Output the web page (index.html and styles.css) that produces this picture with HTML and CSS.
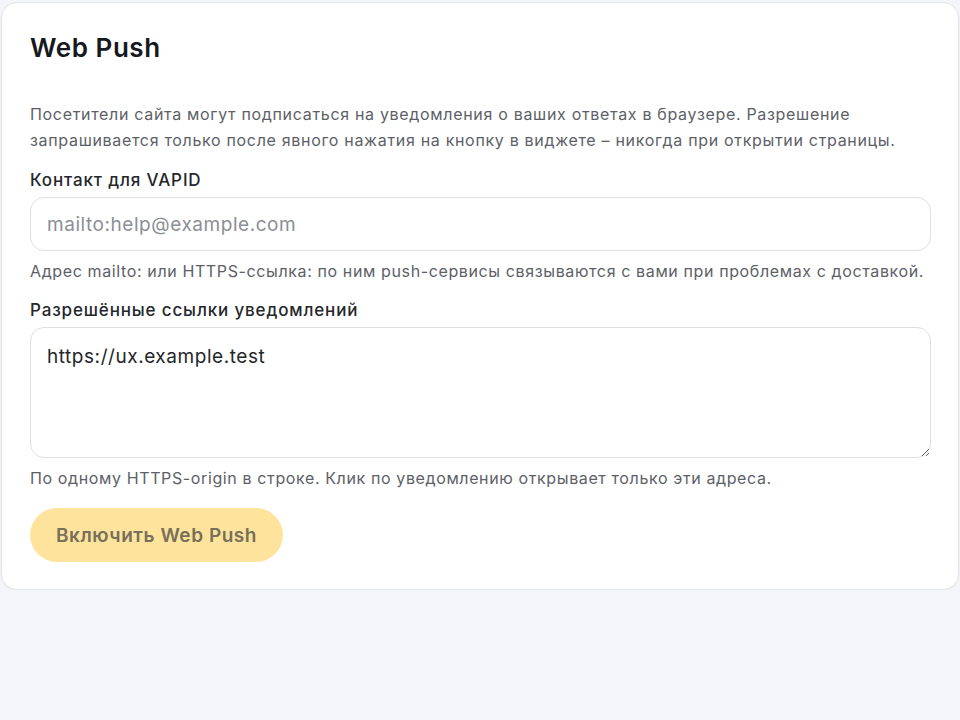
FILE: index.html
```html
<!DOCTYPE html>
<html lang="ru">
<head>
<meta charset="utf-8">
<title>Web Push</title>
<link rel="stylesheet" href="styles.css">
</head>
<body>
<section class="card">
  <h2 class="title">Web Push</h2>
  <p class="intro">Посетители сайта могут подписаться на уведомления о ваших ответах в браузере. Разрешение запрашивается только после явного нажатия на кнопку в виджете – никогда при открытии страницы.</p>
  <div class="field">
    <label class="label" for="vapid">Контакт для VAPID</label>
    <input class="input" id="vapid" type="text" placeholder="mailto:help@example.com">
    <p class="hint">Адрес mailto: или HTTPS-ссылка: по ним push-сервисы связываются с вами при проблемах с доставкой.</p>
  </div>
  <div class="field">
    <label class="label" for="origins">Разрешённые ссылки уведомлений</label>
    <textarea class="input textarea" id="origins">https://ux.example.test</textarea>
    <p class="hint">По одному HTTPS-origin в строке. Клик по уведомлению открывает только эти адреса.</p>
  </div>
  <button class="btn" type="button" disabled>Включить Web Push</button>
</section>
</body>
</html>
```

FILE: styles.css
```css
html, body {
  margin: 0;
  padding: 0;
  background: #f3f5f8;
}
body {
  padding: 2px 1px 0 1px;
  font-family: Inter, "Noto Sans", sans-serif;
  color: #1f2328;
}
.card {
  background: #ffffff;
  border: 1px solid #e3e6ea;
  border-radius: 16px;
  padding: 28px 27px 27px 28px;
  box-shadow: 0 1px 2px rgba(20, 30, 50, 0.04);
}
.title {
  margin: 0;
  font-size: 26px;
  font-weight: 600;
  line-height: 34px;
  color: #16191d;
  letter-spacing: 0.55px;
}
.intro {
  margin: 36px 0 0 0;
  font-size: 16px;
  line-height: 26px;
  color: #5c6167;
  letter-spacing: 0.68px;
}
.field {
  display: flex;
  flex-direction: column;
  margin-top: 16px;
}
.label {
  font-size: 17px;
  font-weight: 500;
  line-height: 22px;
  color: #24272b;
  margin-bottom: 6px;
  letter-spacing: 0.85px;
}
.input {
  box-sizing: border-box;
  width: 100%;
  height: 54px;
  border: 1px solid #dcdfe4;
  border-radius: 14px;
  padding: 0 16px;
  font-family: inherit;
  font-size: 19px;
  letter-spacing: 0.55px;
  color: #23262a;
  background: #ffffff;
  outline: none;
}
.input::placeholder {
  color: #8b8f95;
}
.textarea {
  height: 131px;
  padding: 15px 16px 14px 16px;
  line-height: 27px;
  resize: vertical;
}
.hint {
  margin: 8px 0 0 0;
  font-size: 16px;
  line-height: 24px;
  color: #5c6167;
  letter-spacing: 0.62px;
}
.btn {
  align-self: flex-start;
  margin-top: 18px;
  height: 54px;
  padding: 0 26px;
  border: none;
  border-radius: 27px;
  background: #fde39b;
  color: #77705a;
  font-family: inherit;
  font-size: 19px;
  font-weight: 600;
  letter-spacing: 0.55px;
  cursor: default;
}
```
